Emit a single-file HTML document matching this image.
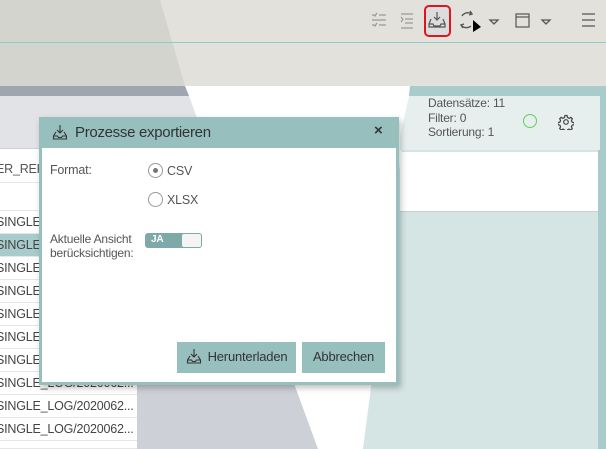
<!DOCTYPE html>
<html><head><meta charset="utf-8"><style>
*{margin:0;padding:0;box-sizing:border-box}
html,body{width:606px;height:449px;overflow:hidden}
body{position:relative;font-family:"Liberation Sans",sans-serif;color:#555;font-size:12.5px;letter-spacing:-0.2px}
.a{position:absolute}
.row{position:absolute;left:0;width:137px;height:23px;border-bottom:1px solid #e6e6e6;background:#fff;font-size:12.5px;line-height:23px;color:#444;white-space:nowrap;overflow:hidden;text-indent:-4px}
.btn{position:absolute;background:#97bfbe;color:#333;font-size:13px;line-height:30px;text-align:center}
</style></head><body>
<svg class="a" style="left:0;top:0" width="606" height="449">
<rect x="0" y="0" width="606" height="86" fill="#d4d4cf"/>
<polygon points="160,0 606,0 606,86 185,86" fill="#e2e1dc"/>
<rect x="0" y="42" width="606" height="1" fill="#8fcdc4"/>
<rect x="0" y="86" width="606" height="363" fill="#fff"/>
<polygon points="0,86 185,86 318,449 0,449" fill="#cdd0d7"/>
<polygon points="0,86 185,86 189,96 0,96" fill="#a0a6b0"/>
<polygon points="0,96 189,96 208,148 0,148" fill="#e2e3e7"/>
<polygon points="410,86 606,86 606,449 363,449" fill="#d5e5e4"/>
<polygon points="410,86 606,86 606,96 409,96" fill="#a8cccc"/>
<rect x="400" y="96" width="200" height="54" fill="#e6efee"/>
<polygon points="400,96 409,96 397,150 400,150" fill="#fff"/>
<rect x="400" y="152" width="198" height="59" fill="#fff"/>
<rect x="400" y="211" width="198" height="1" fill="#ccc"/>
<rect x="600" y="96" width="6" height="353" fill="#a8cccc"/>
<rect x="598" y="150" width="2" height="299" fill="#a8cccc"/>
</svg>
<svg class="a" style="left:360px;top:0" width="246" height="42" fill="none" stroke="#555" stroke-width="1.2">
<g stroke="#999"><path d="M12 15h2l1 1 2-3M19 15h7M12 20h14M12 25h2l1 1 2-3M19 25h7"/></g>
<g stroke="#999"><path d="M41 14h12M45 19h8M45 23h8M41 28h12M41 17l2 2.5-2 2.5"/></g>
<rect x="65" y="6" width="25" height="30" rx="4" stroke="#e0141e" stroke-width="2" fill="#ddd"/>
<path d="M77 12v8M74 17l3 3 3-3M71 19l-2 5v3h16v-3l-2-5M69 24h4l1 2h6l1-2h4"/>
<path d="M112 14a7 7 0 0 0-10 2M101 25a7 7 0 0 0 10 1M110 11l2 3-3 1M103 28l-2-3 3-1" stroke-width="1.4"/>
<polygon points="113,20 121,27 113,32" fill="#000" stroke="none"/>
<path d="M130 20l4 4 4-4z" stroke-width="1.3"/>
<rect x="156" y="14" width="13" height="13"/><path d="M156 17h13"/>
<path d="M182 20l4 4 4-4z" stroke-width="1.3"/>
<path d="M222 14h13M222 20h13M222 26h13"/>
</svg>
<div class="row" style="top:149px;height:34px;line-height:40px;color:#555">ER_REF</div>
<div class="row" style="top:183px;height:28px"></div>
<div class="row" style="top:211px">SINGLE_</div>
<div class="row" style="top:234px;background:#a8cccc">SINGLE_</div>
<div class="row" style="top:257px">SINGLE_</div>
<div class="row" style="top:280px">SINGLE_</div>
<div class="row" style="top:303px">SINGLE_</div>
<div class="row" style="top:326px">SINGLE_</div>
<div class="row" style="top:349px">SINGLE_</div>
<div class="row" style="top:372px">SINGLE_LOG/2020062...</div>
<div class="row" style="top:395px">SINGLE_LOG/2020062...</div>
<div class="row" style="top:418px">SINGLE_LOG/2020062...</div>
<div class="row" style="top:441px;height:8px"></div>
<div class="a" style="left:428px;top:96px;font-size:12px;line-height:14.5px;color:#555">Datensätze: 11<br>Filter: 0<br>Sortierung: 1</div>
<div class="a" style="left:523px;top:114px;width:14px;height:14px;border:1.5px solid #5fcf5f;border-radius:50%"></div>
<svg class="a" style="left:558px;top:114px" width="16" height="16" fill="none" stroke="#444" stroke-width="1.2"><circle cx="8" cy="8" r="2.3"/><path d="M7 1.5h2l.5 2 1.5.8 1.9-.9 1.4 1.4-.9 1.9.8 1.5 2 .5v2l-2 .5-.8 1.5.9 1.9-1.4 1.4-1.9-.9-1.5.8-.5 2h-2l-.5-2-1.5-.8-1.9.9-1.4-1.4.9-1.9-.8-1.5-2-.5v-2l2-.5.8-1.5-.9-1.9 1.4-1.4 1.9.9 1.5-.8z"/></svg>
<div class="a" style="left:39px;top:117px;width:360px;height:268px;background:#97bfbe;box-shadow:2px 3px 6px rgba(0,0,0,.25)">
<div class="a" style="left:3px;top:31px;width:354px;height:234px;background:#fff"></div>
</div>
<svg class="a" style="left:52px;top:124px" width="16" height="16" fill="none" stroke="#333" stroke-width="1.1"><path d="M8 1v8M5 6l3 3 3-3M4 8l-2.5 4v3h13v-3L12 8M1.5 12h4l1 1.5h3l1-1.5h4"/></svg>
<div class="a" style="left:75px;top:124px;font-size:15px;color:#333;letter-spacing:-0.3px">Prozesse exportieren</div>
<div class="a" style="left:374px;top:122px;font-size:15px;font-weight:bold;color:#333">×</div>
<div class="a" style="left:50px;top:163px">Format:</div>
<div class="a" style="left:148px;top:163px;width:15px;height:15px;border:1.3px solid #999;border-radius:50%"><div class="a" style="left:4px;top:4px;width:5px;height:5px;background:#777;border-radius:50%"></div></div>
<div class="a" style="left:167px;top:164px">CSV</div>
<div class="a" style="left:148px;top:192px;width:15px;height:15px;border:1.3px solid #999;border-radius:50%"></div>
<div class="a" style="left:167px;top:193px">XLSX</div>
<div class="a" style="left:50px;top:232px;line-height:14px;font-size:12px">Aktuelle Ansicht<br>berücksichtigen:</div>
<div class="a" style="left:145px;top:233px;width:57px;height:15px;border-radius:3px;background:#7fa9a8;overflow:hidden"><span class="a" style="left:6px;top:1px;font-size:10px;font-weight:bold;color:#fff">JA</span><div class="a" style="left:37px;top:1px;width:19px;height:13px;background:#f4f4f4;border-radius:2px"></div></div>
<div class="btn" style="left:177px;top:342px;width:119px;height:31px"><svg style="vertical-align:-3px;margin-right:6px" width="16" height="16" fill="none" stroke="#333" stroke-width="1.1"><path d="M8 1v8M5 6l3 3 3-3M4 8l-2.5 4v3h13v-3L12 8M1.5 12h4l1 1.5h3l1-1.5h4"/></svg>Herunterladen</div>
<div class="btn" style="left:302px;top:342px;width:83px;height:31px">Abbrechen</div>
</body></html>
